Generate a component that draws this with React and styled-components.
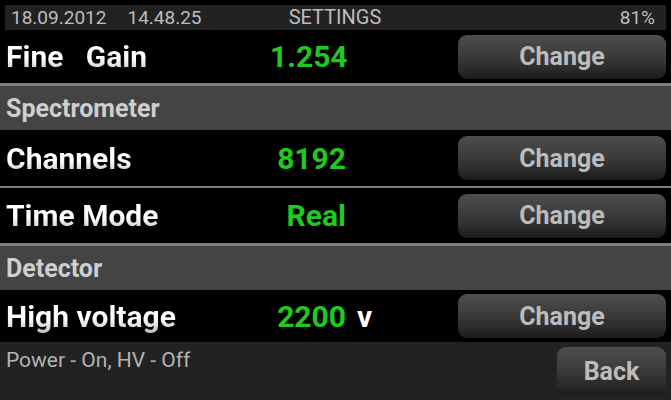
import styled, { createGlobalStyle } from "styled-components";

const GlobalStyle = createGlobalStyle`
  html, body {
    margin: 0;
    padding: 0;
    background: #000;
  }
  body {
    font-family: Roboto, "Liberation Sans", sans-serif;
  }
`;

const Screen = styled.div`
  width: 671px;
  height: 400px;
  background: #000;
  display: flex;
  flex-direction: column;
  overflow: hidden;
`;

const StatusBar = styled.div`
  margin: 5px 5px 0;
  height: 25px;
  background: #222;
  display: grid;
  grid-template-columns: 1fr auto 1fr;
  align-items: center;
  padding: 0 11px 0 6px;
  color: #bdbdbd;
  font-size: 19px;
  line-height: 25px;
`;

const Time = styled.span`
  margin-left: 21px;
`;

const Title = styled.span`
  font-size: 20px;
  margin-left: 4px;
`;

const Battery = styled.span`
  justify-self: end;
`;

const Row = styled.div`
  height: ${(p) => p.$h}px;
  box-sizing: border-box;
  border-bottom: ${(p) => p.$sep || 0}px solid #7e7e7e;
  display: grid;
  grid-template-columns: 270px 76px 112px 208px;
  align-items: center;
`;

const Label = styled.div`
  justify-self: start;
  margin-left: 6px;
  font-size: 30px;
  font-weight: 700;
  white-space: pre;
  background: linear-gradient(to bottom, #fff 55%, #b8b8b8 100%);
  -webkit-background-clip: text;
  background-clip: text;
  color: transparent;
`;

const Value = styled.div`
  color: #1fc91f;
  font-size: 30px;
  font-weight: 700;
  text-align: right;
  white-space: nowrap;
`;

const Unit = styled.div`
  padding-left: 11px;
  color: #fff;
  font-size: 30px;
  font-weight: 700;
`;

const Button = styled.button`
  height: ${(p) => p.$h || 44}px;
  width: ${(p) => p.$w || 208}px;
  border: none;
  border-radius: 9px;
  background: linear-gradient(
    to bottom,
    #4e4e4e 0%,
    #3e3e3e 40%,
    #2c2c2c 75%,
    #1b1b1b 100%
  );
  color: #bcbcbc;
  font-family: Roboto, "Liberation Sans", sans-serif;
  font-size: 25px;
  font-weight: 700;
  padding: 0;
  cursor: pointer;
`;

const SectionHeader = styled.div`
  height: 44px;
  background: #444;
  display: flex;
  align-items: center;
  padding-left: 6px;
  color: #cfcfcf;
  font-size: 25px;
  font-weight: 700;
`;

const Footer = styled.div`
  flex: 1;
  background: #222;
  display: flex;
  justify-content: space-between;
  align-items: flex-start;
  padding: 5px 5px 0 6px;
`;

const StatusText = styled.div`
  color: #b4b4b4;
  font-size: 21px;
  margin-top: 1px;
`;

const settings = {
  fine: { label: "Fine   Gain", value: "1.254" },
  channels: { label: "Channels", value: "8192" },
  timeMode: { label: "Time Mode", value: "Real" },
  hv: { label: "High voltage", value: "2200", unit: "v" },
};

function SettingRow({ item, h, sep }) {
  return (
    <Row $h={h} $sep={sep}>
      <Label>{item.label}</Label>
      <Value>{item.value}</Value>
      <Unit>{item.unit}</Unit>
      <Button>Change</Button>
    </Row>
  );
}

export default function App() {
  return (
    <>
      <GlobalStyle />
      <Screen>
        <StatusBar>
          <span>
            18.09.2012<Time>14.48.25</Time>
          </span>
          <Title>SETTINGS</Title>
          <Battery>81%</Battery>
        </StatusBar>
        <SettingRow item={settings.fine} h={56} sep={3} />
        <SectionHeader>Spectrometer</SectionHeader>
        <SettingRow item={settings.channels} h={58} sep={2} />
        <SettingRow item={settings.timeMode} h={58} sep={3} />
        <SectionHeader>Detector</SectionHeader>
        <SettingRow item={settings.hv} h={52} />
        <Footer>
          <StatusText>Power - On, HV - Off</StatusText>
          <Button $w={109} $h={48}>
            Back
          </Button>
        </Footer>
      </Screen>
    </>
  );
}
